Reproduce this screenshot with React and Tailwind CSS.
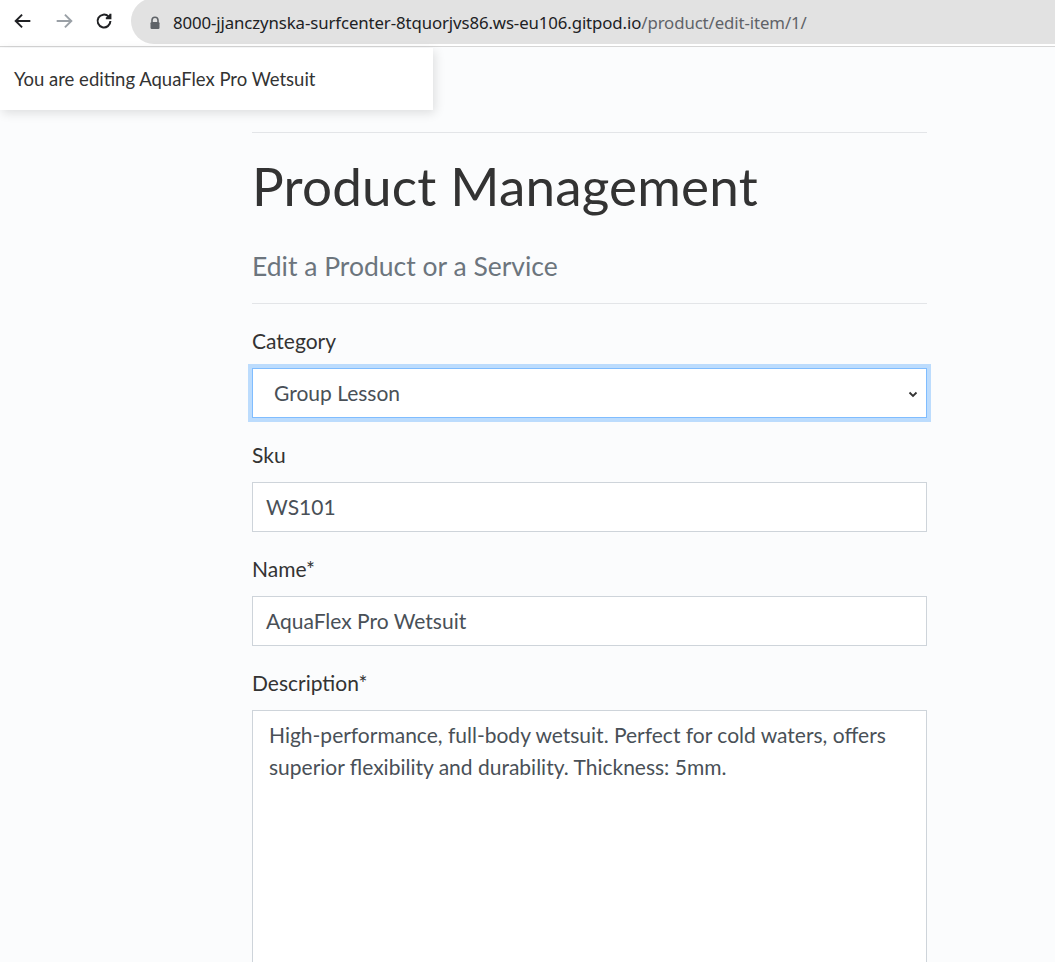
import React from 'react';

function BrowserBar() {
  return (
    <div className="h-[47px] bg-white border-b border-[#d6d6d6] flex items-center">
      <div className="flex items-center w-[131px] h-full pb-1">
        <svg className="ml-[12px]" width="22" height="22" viewBox="0 0 24 24" fill="none" stroke="#202124" strokeWidth="2.1">
          <path d="M20 12H5M11 5l-7 7 7 7" />
        </svg>
        <svg className="ml-[19px]" width="22" height="22" viewBox="0 0 24 24" fill="none" stroke="#9aa0a6" strokeWidth="2.1">
          <path d="M4 12h15M13 5l7 7-7 7" />
        </svg>
        <svg className="ml-[18px]" width="22" height="22" viewBox="0 0 24 24" fill="none" stroke="#202124" strokeWidth="2.2">
          <path d="M19 12a7 7 0 1 1-2.05-4.95" />
          <path d="M19 4v5h-5" fill="#202124" />
        </svg>
      </div>
      <div className="flex-1 h-[46px] -mt-[5px] bg-[#e2e2e2] rounded-l-full flex items-center pl-[18px] pt-1">
        <svg width="12" height="14" viewBox="0 0 12 14" fill="#5f6368">
          <path d="M3 6V4.2a3 3 0 0 1 6 0V6" fill="none" stroke="#5f6368" strokeWidth="1.6" />
          <rect x="1.5" y="6" width="9" height="7" rx="1.2" />
        </svg>
        <span className="ml-[12px] text-[16.8px] font-['Noto_Sans',sans-serif] tracking-[-0.1px]">
          <span className="text-[#202124]">8000-jjanczynska-surfcenter-8tquorjvs86.ws-eu106.gitpod.io</span>
          <span className="text-[#5f6368]">/product/edit-item/1/</span>
        </span>
      </div>
    </div>
  );
}

function Field({ label, children }) {
  return (
    <div className="mb-[22px]">
      <label className="block text-[21px] leading-[30px] mb-[12px] text-[#333]">{label}</label>
      {children}
    </div>
  );
}

export default function App() {
  return (
    <div className="min-h-[962px] bg-[#fbfcfd] font-['Lato',sans-serif] text-[#333] relative overflow-hidden">
      <BrowserBar />

      {/* toast */}
      <div className="absolute left-0 top-[48px] w-[433px] h-[62px] bg-white shadow-[2px_3px_10px_rgba(0,0,0,0.12)] flex items-center pl-[14px] pt-[2px] text-[18.5px] text-[#333]">
        You are editing AquaFlex Pro Wetsuit
      </div>

      <div className="ml-[252px] w-[675px] pt-[85px]">
        <hr className="border-t border-[#e3e5e8]" />
        <h1 className="text-[53px] leading-[67px] mt-[19px] text-[#333] tracking-[0.2px]">Product Management</h1>
        <h2 className="text-[26.5px] leading-[32px] mt-[31px] text-[#6c757d]">Edit a Product or a Service</h2>
        <hr className="border-t border-[#e3e5e8] mt-[21px] mb-[22px]" />

        <Field label="Category">
          <div className="relative h-[50px] border border-[#80bdff] shadow-[0_0_0_4px_rgba(0,123,255,0.25)] bg-white flex items-center pl-[21px] text-[21px] text-[#495057]">
            Group Lesson
            <svg className="absolute right-[7px] top-[19px]" width="12" height="12" viewBox="0 0 12 12" fill="none" stroke="#333" strokeWidth="1.8">
              <path d="M2.5 4.5L6 8l3.5-3.5" />
            </svg>
          </div>
        </Field>

        <Field label="Sku">
          <div className="h-[50px] border border-[#ced4da] bg-white flex items-center pl-[13px] text-[21px] text-[#495057]">WS101</div>
        </Field>

        <Field label="Name*">
          <div className="h-[50px] border border-[#ced4da] bg-white flex items-center pl-[13px] text-[21px] text-[#495057]">AquaFlex Pro Wetsuit</div>
        </Field>

        <Field label="Description*">
          <div className="h-[300px] border border-[#ced4da] bg-white px-[16px] pt-[8px] text-[21px] leading-[32px] text-[#495057]">
            High-performance, full-body wetsuit. Perfect for cold waters, offers superior flexibility and durability. Thickness: 5mm.
          </div>
        </Field>
      </div>
    </div>
  );
}
